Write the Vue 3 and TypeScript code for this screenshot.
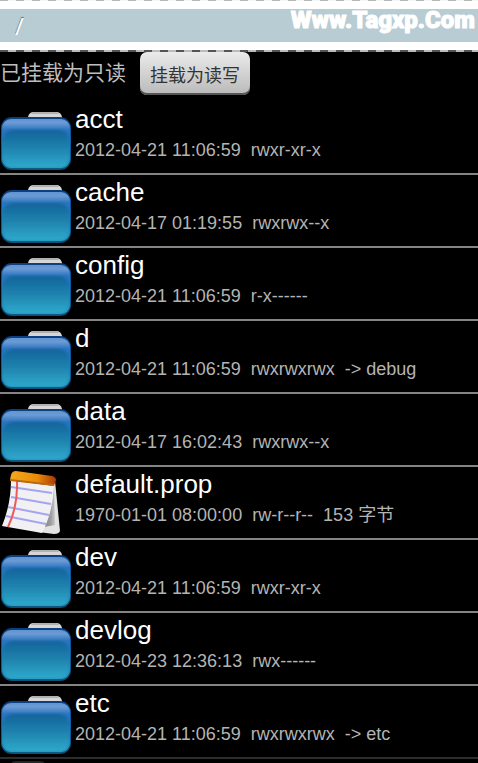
<script setup lang="ts">
import { ref } from 'vue'

interface Entry {
  name: string
  date: string
  mode: string
  extra?: string
  kind: 'folder' | 'file'
}

const path = ref('/')

const entries: Entry[] = [
  { name: 'acct', date: '2012-04-21 11:06:59', mode: 'rwxr-xr-x', kind: 'folder' },
  { name: 'cache', date: '2012-04-17 01:19:55', mode: 'rwxrwx--x', kind: 'folder' },
  { name: 'config', date: '2012-04-21 11:06:59', mode: 'r-x------', kind: 'folder' },
  { name: 'd', date: '2012-04-21 11:06:59', mode: 'rwxrwxrwx', extra: '-> debug', kind: 'folder' },
  { name: 'data', date: '2012-04-17 16:02:43', mode: 'rwxrwx--x', kind: 'folder' },
  { name: 'default.prop', date: '1970-01-01 08:00:00', mode: 'rw-r--r--', extra: '153 字节', kind: 'file' },
  { name: 'dev', date: '2012-04-21 11:06:59', mode: 'rwxr-xr-x', kind: 'folder' },
  { name: 'devlog', date: '2012-04-23 12:36:13', mode: 'rwx------', kind: 'folder' },
  { name: 'etc', date: '2012-04-21 11:06:59', mode: 'rwxrwxrwx', extra: '-> etc', kind: 'folder' },
]
</script>

<template>
  <div class="explorer">
    <svg class="defs" width="0" height="0" aria-hidden="true">
      <defs>
        <linearGradient id="folder-edge" x1="0" y1="0" x2="0" y2="1">
          <stop offset="0" stop-color="#0b3f7c" />
          <stop offset="0.4" stop-color="#0f5da6" />
          <stop offset="1" stop-color="#0b5179" />
        </linearGradient>
        <linearGradient id="folder-shine" x1="0" y1="0" x2="0" y2="1">
          <stop offset="0" stop-color="#5f94d3" />
          <stop offset="0.08" stop-color="#6c9bd3" />
          <stop offset="0.22" stop-color="#2b74c0" />
          <stop offset="0.4" stop-color="#1b74bd" />
          <stop offset="0.65" stop-color="#1c82b4" />
          <stop offset="1" stop-color="#2798be" />
        </linearGradient>
        <linearGradient id="folder-body" x1="0" y1="0" x2="0" y2="1">
          <stop offset="0" stop-color="#13649b" />
          <stop offset="0.5" stop-color="#1f83ae" />
          <stop offset="1" stop-color="#2fa9cc" />
        </linearGradient>
        <linearGradient id="pad-top" x1="0" y1="0" x2="1" y2="0">
          <stop offset="0" stop-color="#f7a81c" />
          <stop offset="0.6" stop-color="#e88a08" />
          <stop offset="1" stop-color="#a93608" />
        </linearGradient>
        <linearGradient id="pad-back" x1="0" y1="0" x2="1" y2="0">
          <stop offset="0" stop-color="#858585" />
          <stop offset="0.6" stop-color="#9c9c9c" />
          <stop offset="1" stop-color="#c8c8c8" />
        </linearGradient>
        <filter id="soften" x="-10%" y="-10%" width="120%" height="120%">
          <feGaussianBlur stdDeviation="1" />
        </filter>
      </defs>
    </svg>

    <header class="path-bar">
      <input v-model="path" class="path" type="text" aria-label="Path" />
      <span class="watermark">Www.Tagxp.Com</span>
    </header>

    <div class="mount">
      <span class="mount-state">已挂载为只读</span>
      <button class="mount-button" type="button">挂载为读写</button>
    </div>

    <ul class="list">
      <li v-for="entry in entries" :key="entry.name" class="row">
        <svg v-if="entry.kind === 'folder'" class="icon" viewBox="0 0 72 71" aria-hidden="true">
          <path d="M28 20 V15 Q29 10 34 10 H56 Q61 10 62 15 V20Z" fill="#d6d6d6" />
          <path d="M31 12 Q32 10 35 10 H55 Q58 10 59 12Z" fill="#b0b0b0" />
          <rect x="1" y="15" width="70" height="53" rx="11" fill="url(#folder-edge)" />
          <rect x="2" y="17" width="68" height="49" rx="9" fill="url(#folder-shine)" />
          <path d="M3 38 Q4 28 14 28 H58 Q68 28 69 38 V56 Q68 65 59 65 H13 Q4 65 3 56Z" fill="url(#folder-body)" filter="url(#soften)" />
        </svg>
        <svg v-else class="icon" viewBox="0 0 72 71" aria-hidden="true">
          <path d="M46 17 L55 14 L60 64 Q59 67 54 67 L38 65Z" fill="#e2e2e2" />
          <path d="M48 17 L54 16 L55 58 L44 60Z" fill="url(#pad-back)" />
          <path d="M11 13 L54 19 Q53 45 42 66 L2 59 Q11 37 11 13Z" fill="#f1f1f3" />
          <path d="M11 20 L52 26 M11 30 L51 37 M8 40 L49 48 M6 49 L46 57" stroke="#a6a4ee" stroke-width="2" fill="none" />
          <path d="M17 14 Q18 39 8 60" stroke="#ec5a5a" stroke-width="2" fill="none" />
          <path d="M11 8 Q12 4 16 4 L52 9 Q56 10 56 13 L54 19 L10 13Z" fill="url(#pad-top)" />
          <path d="M10 12 L54 17 V19 L10 14Z" fill="#b96a10" />
        </svg>
        <div class="info">
          <span class="name">{{ entry.name }}</span>
          <span class="meta">
            <span>{{ entry.date }}</span>
            <span>{{ entry.mode }}</span>
            <span v-if="entry.extra">{{ entry.extra }}</span>
          </span>
        </div>
      </li>
      <li class="row" aria-hidden="true">
        <svg class="icon" viewBox="0 0 72 71">
          <path d="M11 8 V5 Q12 2 16 2 H40 Q44 2 45 5 V8Z" fill="#262626" />
        </svg>
      </li>
    </ul>
  </div>
</template>

<style>
body {
  background: #000;
  overflow: hidden;
}
</style>

<style scoped>
.explorer {
  height: 100vh;
  overflow: hidden;
  display: flex;
  flex-direction: column;
  background: #000;
  font-family: "Liberation Sans", "Noto Sans CJK SC", sans-serif;
  color: #fff;
}
.defs {
  position: absolute;
}
.path-bar {
  position: relative;
  flex: none;
  box-sizing: border-box;
  height: 52px;
  padding: 9px 0 10px;
  background:
    repeating-linear-gradient(90deg, #b8b8b8 0 8px, #f4f6f8 8px 16px) 0 0 / 100% 1px no-repeat,
    repeating-linear-gradient(90deg, #555 0 8px, #bbb 8px 16px) 0 100% / 100% 2px no-repeat,
    #fff;
}
.path {
  display: block;
  box-sizing: border-box;
  width: 100%;
  height: 33px;
  padding: 0 15px;
  border: 0;
  border-radius: 0;
  outline: 0;
  background: #b8ccd3;
  color: #fff;
  font: 24px/33px "Noto Sans", sans-serif;
  text-shadow: 0 -1px 1px #555;
}
.watermark {
  position: absolute;
  top: 0;
  right: 3px;
  color: #fff;
  font: 900 24px/40px Roboto, sans-serif;
  -webkit-text-stroke: 1px #fff;
}
.mount {
  flex: none;
  display: flex;
  align-items: flex-start;
  gap: 14px;
  height: 50px;
}
.mount-state {
  color: #bebebe;
  font-size: 21px;
  line-height: 42px;
}
.mount-button {
  height: 43px;
  padding: 0 10px;
  border: 0;
  border-radius: 7px;
  background: linear-gradient(#ebebeb, #b9b9b9);
  box-shadow: inset 0 -2px 0 #555;
  color: #333;
  font: 18px "Noto Sans CJK SC", sans-serif;
}
.list {
  flex: none;
  margin: 0;
  padding: 0;
  list-style: none;
}
.row {
  display: flex;
  gap: 3px;
  border-bottom: 2px solid #858585;
}
.row:nth-last-child(2) {
  border-color: #2c2c2c;
}
.icon {
  flex: none;
  width: 72px;
  height: 71px;
}
.info {
  display: flex;
  flex-direction: column;
}
.name {
  font-size: 26px;
  line-height: 34px;
}
.meta {
  display: flex;
  gap: 10px;
  color: #b4b4b4;
  font-size: 18px;
  line-height: 28px;
}
</style>
